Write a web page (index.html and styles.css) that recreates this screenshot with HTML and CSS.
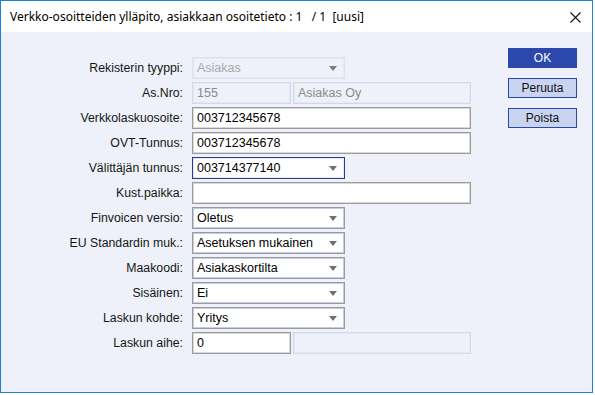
FILE: index.html
```html
<!DOCTYPE html>
<html lang="fi">
<head>
  <meta charset="UTF-8" />
  <title>Verkko-osoitteiden ylläpito</title>
  <link rel="stylesheet" href="styles.css">
</head>
<body>

  <div class="window">
    <div class="titlebar">
      <span class="title">Verkko-osoitteiden ylläpito, asiakkaan osoitetieto : 1 &nbsp; / 1 &nbsp;[uusi]</span>
      <span class="close">
        <svg width="11" height="11" viewBox="0 0 11 11">
          <path d="M0.5 0.5 L10.5 10.5 M10.5 0.5 L0.5 10.5" stroke="#111" stroke-width="1.1" fill="none"/>
        </svg>
      </span>
    </div>

    <div class="content">
      <div class="form">
        <label>Rekisterin tyyppi:</label>
        <div class="select disabled"><select disabled><option>Asiakas</option></select></div>

        <label>As.Nro:</label>
        <div class="pair">
          <input class="short" type="text" value="155" disabled />
          <input class="rest" type="text" value="Asiakas Oy" disabled />
        </div>

        <label>Verkkolaskuosoite:</label>
        <input class="wide" type="text" value="003712345678" />

        <label>OVT-Tunnus:</label>
        <input class="wide" type="text" value="003712345678" />

        <label>Välittäjän tunnus:</label>
        <div class="select focus"><select><option>003714377140</option></select></div>

        <label>Kust.paikka:</label>
        <input class="wide" type="text" value="" />

        <label>Finvoicen versio:</label>
        <div class="select"><select><option>Oletus</option></select></div>

        <label>EU Standardin muk.:</label>
        <div class="select"><select><option>Asetuksen mukainen</option></select></div>

        <label>Maakoodi:</label>
        <div class="select"><select><option>Asiakaskortilta</option></select></div>

        <label>Sisäinen:</label>
        <div class="select"><select><option>Ei</option></select></div>

        <label>Laskun kohde:</label>
        <div class="select"><select><option>Yritys</option></select></div>

        <label>Laskun aihe:</label>
        <div class="pair">
          <input class="short" type="text" value="0" />
          <input class="rest" type="text" value="" disabled />
        </div>
      </div>

      <div class="buttons">
        <button class="primary">OK</button>
        <button>Peruuta</button>
        <button>Poista</button>
      </div>
    </div>
  </div>

</body>
</html>
```

FILE: styles.css
```css
html {
  background: #ffffff;
}

body {
  margin: 0;
  font-family: "Liberation Sans", Arial, sans-serif;
  font-size: 12px;
  color: #1b1b1b;
}

.window {
  width: 591px;
  height: 391px;
  border: 1px solid #1883d7;
  background: #eef1f9;
  display: flex;
  flex-direction: column;
}

.titlebar {
  height: 31px;
  background: #ffffff;
  display: flex;
  align-items: center;
  justify-content: space-between;
  padding: 0 11px 0 9px;
}

.title {
  font-family: "Noto Sans", "Open Sans", sans-serif;
  font-size: 12px;
  color: #000;
  white-space: nowrap;
}

.close {
  display: flex;
  margin-top: 1px;
}

.content {
  display: flex;
  justify-content: space-between;
  align-items: flex-start;
  padding: 16px 15px 0 0;
}

.form {
  display: grid;
  grid-template-columns: 182px 279px;
  grid-auto-rows: 22px;
  column-gap: 9px;
  row-gap: 3px;
  margin-top: 9px;
}

.form label {
  text-align: right;
  align-self: center;
  white-space: nowrap;
  font-size: 12.3px;
  color: #161616;
}

.form input,
.form select {
  box-sizing: border-box;
  height: 22px;
  margin: 0;
  font-family: "Liberation Sans", Arial, sans-serif;
  font-size: 12.5px;
  color: #000;
  background: #fff;
  border: 1px solid #9b9b9b;
  box-shadow: inset 0 0 0 1px #d9d9d9;
  padding: 0 4px;
  outline: none;
}

.form input:disabled,
.form select:disabled {
  background: #eef1f9;
  color: #8c8c8c;
  border-color: #d3d9ea;
  box-shadow: inset 0 0 0 1px #e4e8f3;
}

.wide {
  width: 279px;
}

.pair {
  display: flex;
  gap: 2px;
}

.pair .short {
  width: 99px;
}

.pair .rest {
  width: 178px;
}

.select {
  position: relative;
  width: 153px;
}

.select select {
  appearance: none;
  width: 153px;
  box-shadow: inset 0 0 0 1px #c3cbe6;
}

.select::after {
  content: "";
  position: absolute;
  right: 8px;
  top: 9px;
  border-left: 4px solid transparent;
  border-right: 4px solid transparent;
  border-top: 5px solid #707070;
  pointer-events: none;
}

.select.disabled::after {
  border-top-color: #7c7c7c;
}

.select.focus select {
  border-color: #2a3b97;
  box-shadow: inset 0 0 0 1px #e6e9f5;
}

.buttons {
  display: flex;
  flex-direction: column;
  gap: 10px;
}

.buttons button {
  width: 69px;
  height: 20px;
  padding: 0;
  font-family: "Liberation Sans", Arial, sans-serif;
  font-size: 12px;
  color: #111;
  background: #c9d4f0;
  border: 1px solid #2c47ab;
  border-radius: 0;
}

.buttons button.primary {
  background: #2c48ad;
  color: #fff;
}
```
